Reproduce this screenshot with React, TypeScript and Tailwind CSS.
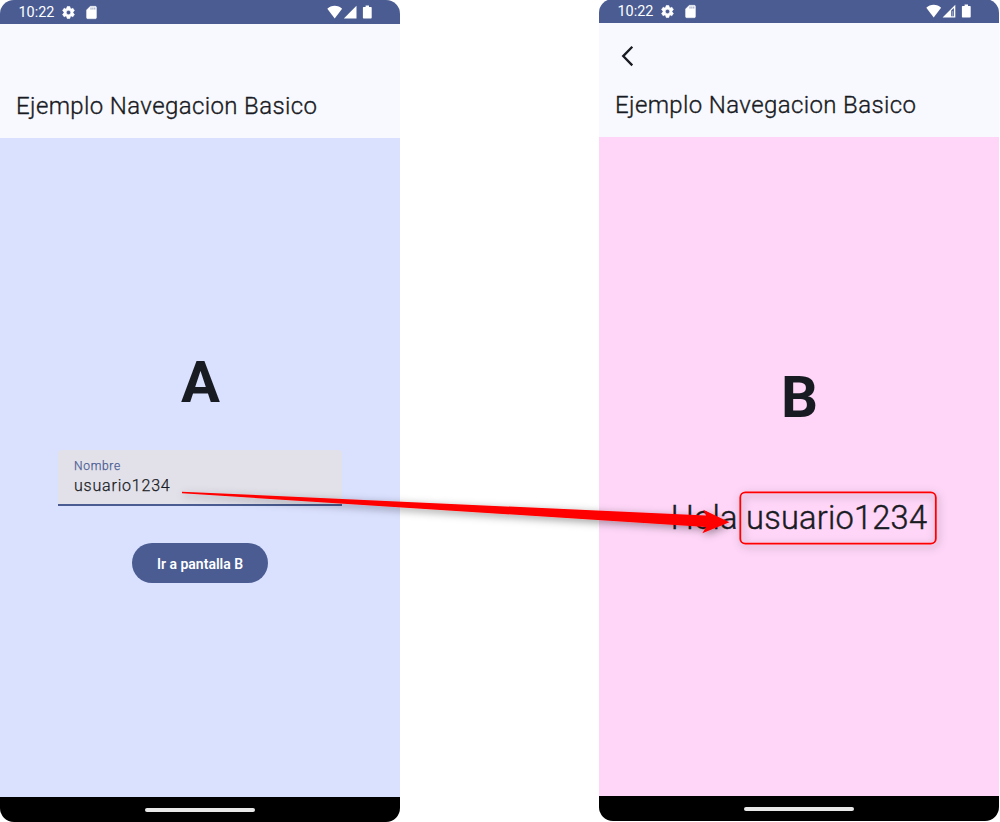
import React from "react";

function StatusBar({ weakSignal }: { weakSignal?: boolean }) {
  return (
    <div className="flex h-6 shrink-0 items-center bg-[#4a5c92] pl-[18.5px] pr-[27px] text-white">
      <span className="w-[42px] pt-0.5 text-[14.4px] leading-6">10:22</span>
      <svg className="h-[15px] w-[15px]" viewBox="0 0 24 24" fill="currentColor">
        <path d="M19.14 12.94c.04-.3.06-.61.06-.94 0-.32-.02-.64-.07-.94l2.03-1.58a.49.49 0 0 0 .12-.61l-1.92-3.32a.488.488 0 0 0-.59-.22l-2.39.96c-.5-.38-1.03-.7-1.62-.94l-.36-2.54a.484.484 0 0 0-.48-.41h-3.84c-.24 0-.43.17-.47.41l-.36 2.54c-.59.24-1.13.57-1.62.94l-2.39-.96c-.22-.08-.47 0-.59.22L2.74 8.87c-.12.21-.08.47.12.61l2.03 1.58c-.05.3-.09.63-.09.94s.02.64.07.94l-2.03 1.58a.49.49 0 0 0-.12.61l1.92 3.32c.12.22.37.29.59.22l2.39-.96c.5.38 1.03.7 1.62.94l.36 2.54c.05.24.24.41.48.41h3.84c.24 0 .44-.17.47-.41l.36-2.54c.59-.24 1.13-.56 1.62-.94l2.39.96c.22.08.47 0 .59-.22l1.92-3.32c.12-.22.07-.47-.12-.61l-2.01-1.58zM12 15.6A3.6 3.6 0 1 1 12 8.4a3.6 3.6 0 0 1 0 7.2z" stroke="currentColor" strokeWidth="1" />
      </svg>
      <svg className="ml-2 h-[15px] w-[15px]" viewBox="0 0 24 24" fill="currentColor">
        <path d="M18 2h-8L4 8v12c0 1.100.9 2 2 2h12c1.100 0 2-.9 2-2V4c0-1.100-.9-2-2-2zm-6 5h-1.500V4H12v3zm3 0h-1.500V4H15v3zm3 0h-1.500V4H18v3z" stroke="currentColor" strokeWidth="0.6" />
      </svg>
      <svg className="ml-auto h-[14px] w-[46px]" viewBox="0 0 46 14" fill="currentColor">
        <path d="M0.300 3.700C2.200 1.900 4.800.8 7.700.8s5.500 1.100 7.400 2.900L7.700 13.500z" />
        {weakSignal ? (
          <>
            <path d="M29.300.8V13.500H16.600z" />
            <path d="M25.200 6.500L27.900 3.900V12.200H25.200z" fill="#4a5c92" />
            <path d="M26.200 7h1v5.200h-1z" fillOpacity="0.5" />
          </>
        ) : (
          <path d="M29.500.8V13.500H16.800z" />
        )}
        <path d="M36.600 1.900h2V.6h3.400v1.300h2q.7 0 .7.700v10.200q0 .7-.7.700h-7.400q-.7 0-.7-.7V2.600q0-.7.700-.7z" />
      </svg>
    </div>
  );
}

function AppBar({ back }: { back?: boolean }) {
  return (
    <header className="flex h-[114px] shrink-0 flex-col bg-[#f8f9ff] pl-4">
      <div className="flex h-[66px] items-center pl-1">
        {back && (
          <svg className="h-6 w-6" viewBox="0 0 24 24" fill="none" stroke="#191b23" strokeWidth="2.300">
            <path d="M13.300 2.800L4.200 12.100l9.100 9.300" />
          </svg>
        )}
      </div>
      <h1 className="whitespace-nowrap text-[24px] font-light leading-8 tracking-[0.38px] [-webkit-text-stroke:0.35px_#191b23]">
        Ejemplo Navegacion Basico
      </h1>
    </header>
  );
}

function NavBar() {
  return (
    <div className="flex h-[25px] shrink-0 items-center justify-center border-t border-[#00000040] bg-black">
      <div className="h-1 w-[110px] rounded-full bg-[#e8e8e8]" />
    </div>
  );
}

function Phone({ className, children }: { className: string; children: React.ReactNode }) {
  return <section className={`flex h-[822px] w-[400px] flex-col overflow-hidden rounded-[14px] ${className}`}>{children}</section>;
}

export default function App() {
  return (
    <main className="relative flex h-[822px] w-[1000px] gap-[199px] overflow-hidden bg-white font-['Roboto',sans-serif] text-[#191b23]">
      <Phone className="shrink-0">
        <StatusBar />
        <AppBar />
        <div className="flex flex-1 flex-col items-center bg-[#dae1ff] pt-[212px]">
          <div className="pl-px text-[58px] font-bold leading-[64px]">A</div>
          <div className="mt-9 flex h-14 w-[284px] flex-col rounded-t-[4px] border-b-2 border-[#4a5c92] bg-[#e2e1ea] pl-4 pt-2">
            <span className="text-[12px] font-light leading-4 tracking-[0.7px] text-[#4a5c92] [-webkit-text-stroke:0.25px_#4a5c92]">
              Nombre
            </span>
            <span className="text-[16px] font-light leading-6 tracking-[0.8px] [-webkit-text-stroke:0.25px_#191b23]">
              usuario1234
            </span>
          </div>
          <button className="mt-[37px] h-10 w-[136px] rounded-full bg-[#4a5c92] pt-0.5 text-[14px] font-semibold text-white">
            Ir a pantalla B
          </button>
        </div>
        <NavBar />
      </Phone>
      <Phone className="-mt-px shrink-0">
        <StatusBar weakSignal />
        <AppBar back />
        <div className="flex flex-1 flex-col items-center bg-[#ffd6f8] pt-[228px]">
          <div className="pl-px text-[58px] font-bold leading-[64px]">B</div>
          <div className="mt-[69px] text-[32.600px] font-light leading-10 tracking-[0.24px] [-webkit-text-stroke:0.45px_#191b23]">
            Hola usuario1234
          </div>
        </div>
        <NavBar />
      </Phone>
      <svg className="absolute left-0 top-0 h-[822px] w-[1000px]" viewBox="0 0 1000 822">
        <defs>
          <filter id="shade" x="-10%" y="-40%" width="120%" height="200%">
            <feDropShadow dx="1.500" dy="2.500" stdDeviation="4" floodColor="#000" floodOpacity="0.4" />
          </filter>
        </defs>
        <path d="M182 491.700L706 515.500L703.300 509.700L729.500 522.300L702.300 533.300L706 527L182 493.200z" fill="#ff0000" filter="url(#shade)" />
        <rect x="740.300" y="492.400" width="195.500" height="51.300" rx="5" fill="none" stroke="#ff0000" strokeWidth="1.800" filter="url(#shade)" />
      </svg>
    </main>
  );
}
